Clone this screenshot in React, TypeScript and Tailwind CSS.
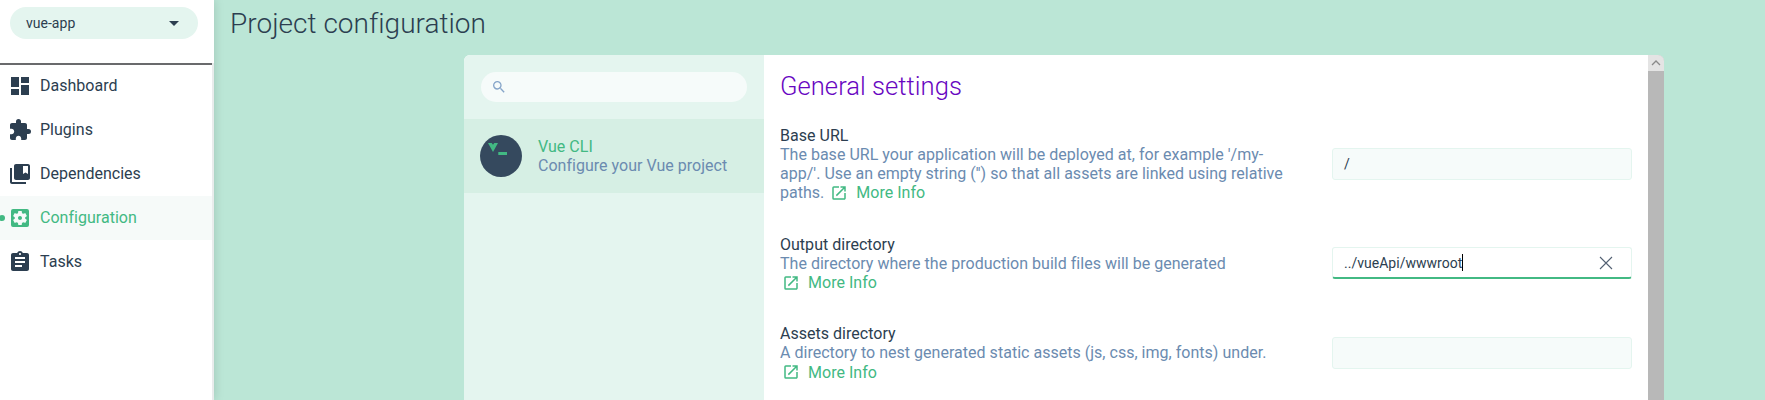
import type { ReactNode } from 'react';
import {
  MdArrowDropDown,
  MdAssignment,
  MdCollectionsBookmark,
  MdDashboard,
  MdExtension,
  MdOpenInNew,
  MdSearch,
  MdSettingsApplications,
} from 'react-icons/md';

const navItems = [
  { label: 'Dashboard', Icon: MdDashboard },
  { label: 'Plugins', Icon: MdExtension },
  { label: 'Dependencies', Icon: MdCollectionsBookmark },
  { label: 'Configuration', Icon: MdSettingsApplications, active: true },
  { label: 'Tasks', Icon: MdAssignment },
];

function Sidebar() {
  return (
    <aside className="z-10 flex w-[214px] shrink-0 flex-col bg-white shadow-[0_0_10px_rgba(0,0,0,0.15)]">
      <div className="h-[65px] border-b-2 border-[#696a6c] pt-[7px] pl-[10px]">
        <div className="flex h-8 w-[188px] items-center justify-between rounded-full bg-[#e4f5ef] pr-3 pl-4 text-sm">
          <span>vue-app</span>
          <MdArrowDropDown size={24} />
        </div>
      </div>
      <nav className="-mt-[2px] flex grow flex-col border-r-2 border-[#e9ecec] pt-[1px]">
        {navItems.map(({ label, Icon, active }) => (
          <div
            key={label}
            className={
              active
                ? 'relative flex h-11 items-center gap-2 bg-[#f6faf9] pl-2 text-[#42b983]'
                : 'flex h-11 items-center gap-2 pl-2'
            }
          >
            {active && <span className="absolute top-[19px] -left-[1px] size-[6px] rounded-full bg-[#42b983]" />}
            <Icon size={24} />
            <span>{label}</span>
          </div>
        ))}
      </nav>
    </aside>
  );
}

function Setting({ title, info, children, field }: { title: string; info: string; children?: ReactNode; field: ReactNode }) {
  return (
    <div className="flex items-center justify-between">
      <div className="w-[512px] leading-[19.2px]">
        <div>{title}</div>
        <div className="text-[#6b8bb0]">
          {info}
          {children}
          <a className="ml-[2px] inline-flex h-[19px] items-center gap-2 align-bottom text-[#42b983]">
            <MdOpenInNew size={18} />
            <span>More Info</span>
          </a>
        </div>
      </div>
      {field}
    </div>
  );
}

function Logo() {
  return (
    <svg width="42" height="42" viewBox="0 0 42 42">
      <circle cx="21" cy="21" r="21" fill="#35495e" />
      <path d="M8 8h3.7l1.3 1.8L14.3 8H18l-5 9z" fill="#42b983" />
      <path d="M18.3 17H27v3h-8.7z" fill="#42b983" />
    </svg>
  );
}

export default function App() {
  return (
    <div className="flex h-[400px] w-[1765px] overflow-hidden bg-[#bbe6d6] font-[Roboto,sans-serif] text-base tracking-[0.02px] text-[#2c3e50]">
      <Sidebar />
      <main className="flex grow flex-col">
        <h1 className="h-[55px] pt-2 pl-4 text-[28px] leading-8 font-light">Project configuration</h1>
        <div className="ml-[250px] flex w-[1200px] grow overflow-hidden rounded-t-md bg-white">
          <section className="w-[300px] bg-[#e4f5ef]">
            <div className="h-16 pt-[17px] pl-[17px]">
              <div className="flex h-[30px] w-[266px] items-center rounded-full bg-[#f6fbfa] pl-[10px] text-[#86a5c9]">
                <MdSearch size={16} />
              </div>
            </div>
            <div className="flex h-[74px] items-center gap-4 bg-[#d6efe4] pl-4">
              <Logo />
              <div className="leading-[19px]">
                <div className="text-[#42b983]">Vue CLI</div>
                <div className="text-[#6b8bb0]">Configure your Vue project</div>
              </div>
            </div>
          </section>
          <section className="flex grow flex-col px-4">
            <h2 className="h-[70.7px] pt-[15px] text-[25.6px] leading-8 font-light text-[#6806c1]">General settings</h2>
            <div className="flex flex-col gap-8">
              <Setting
                title="Base URL"
                info="The base URL your application will be deployed at, for example '/my-app/'. Use an empty string ('') so that all assets are linked using relative paths. "
                field={
                  <div className="flex h-8 w-[300px] items-center rounded-[3px] border border-[#e4f5ef] bg-[#f6fbfa] pl-[11px] text-sm">/</div>
                }
              />
              <Setting
                title="Output directory"
                info="The directory where the production build files will be generated"
                field={
                  <div className="flex h-8 w-[300px] items-center rounded-[3px] border border-b-2 border-[#e4f5ef] border-b-[#42b983] pr-[18px] pl-[11px] text-sm">
                    <span>../vueApi/wwwroot</span>
                    <span className="h-[17px] w-px bg-black" />
                    <svg className="ml-auto" width="14" height="14" viewBox="0 0 14 14" stroke="#526072" strokeWidth="1.1">
                      <path d="M1 1l12 12M13 1L1 13" />
                    </svg>
                  </div>
                }
              >
                <br />
              </Setting>
              <Setting
                title="Assets directory"
                info="A directory to nest generated static assets (js, css, img, fonts) under."
                field={<div className="h-8 w-[300px] rounded-[3px] border border-[#e4f5ef] bg-[#f6fbfa]" />}
              >
                <br />
              </Setting>
            </div>
          </section>
          <div className="w-4 bg-[#b8b8b8]">
            <div className="flex h-4 items-center justify-center bg-[#e4e4e4]">
              <svg width="10" height="6" viewBox="0 0 10 6" fill="none" stroke="#8a8a8a" strokeWidth="1.3">
                <path d="M1 5l4-4 4 4" />
              </svg>
            </div>
          </div>
        </div>
      </main>
    </div>
  );
}
